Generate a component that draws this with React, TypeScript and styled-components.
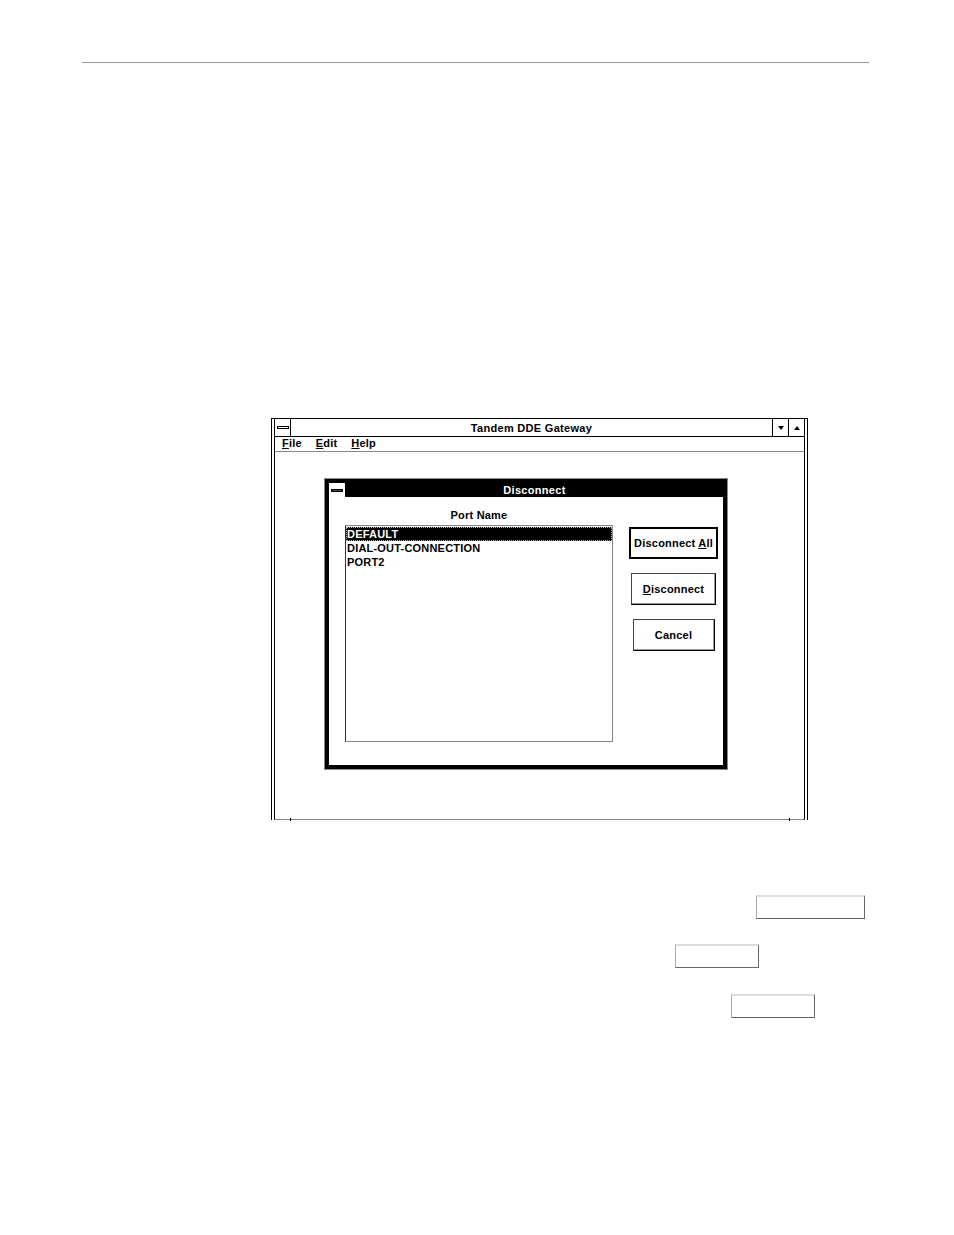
import { FC } from "react";
import styled, { createGlobalStyle } from "styled-components";

const GlobalStyle = createGlobalStyle`
  html, body {
    margin: 0;
    padding: 0;
    background: #fff;
  }
  body {
    font-family: "Liberation Sans", Arial, sans-serif;
    color: #000;
  }
`;

const Page = styled.div`
  width: 954px;
  height: 1235px;
  padding-top: 62px;
  box-sizing: border-box;
  overflow: hidden;
`;

const Rule = styled.div`
  margin-left: 82px;
  width: 787px;
  height: 1px;
  background: #999;
`;

const Figure = styled.div`
  margin-top: 355px;
  margin-left: 271px;
`;

/* win 3.x style main window, double frame on the sides */
const WindowFrame = styled.div`
  position: relative;
  width: 537px;
  height: 402px;
  box-sizing: border-box;
  border: 1px solid #000;
  border-bottom: none;
  padding: 0 2px;

  &:before,
  &:after {
    content: "";
    position: absolute;
    bottom: -1px;
    width: 1px;
    height: 3px;
    background: #000;
  }
  &:before {
    left: 18px;
  }
  &:after {
    right: 17px;
  }
`;

const WindowInner = styled.div`
  height: 100%;
  box-sizing: border-box;
  border-left: 1px solid #000;
  border-right: 1px solid #000;
  border-bottom: 1px solid #888;
  display: flex;
  flex-direction: column;
`;

const TitleBar = styled.div`
  height: 17px;
  border-bottom: 1px solid #000;
  display: flex;
  align-items: stretch;
`;

const SysBox = styled.div<{ $dark?: boolean }>`
  flex: 0 0 ${(p) => (p.$dark ? 16 : 15)}px;
  background: #fff;
  border-right: 1px solid #000;
  display: flex;
  align-items: center;
  justify-content: center;

  span {
    display: block;
    width: 10px;
    height: 1px;
    border: 1px solid #000;
    background: ${(p) => (p.$dark ? "#444" : "#fff")};
  }
`;

const Title = styled.div<{ $inverse?: boolean }>`
  flex: 1;
  display: flex;
  align-items: center;
  justify-content: center;
  font-size: 11px;
  font-weight: bold;
  letter-spacing: 0.3px;
  color: ${(p) => (p.$inverse ? "#fff" : "#000")};
  background: ${(p) => (p.$inverse ? "#000" : "#fff")};
`;

const SizeBtn = styled.div<{ $up?: boolean }>`
  flex: 0 0 15px;
  border-left: 1px solid #000;
  display: flex;
  align-items: center;
  justify-content: center;

  &:after {
    content: "";
    width: 0;
    height: 0;
    border-left: 3px solid transparent;
    border-right: 3px solid transparent;
    ${(p) => (p.$up ? "border-bottom: 4px solid #000;" : "border-top: 4px solid #000;")}
  }
`;

const MenuBar = styled.div`
  height: 15px;
  border-bottom: 1px solid #888;
  display: flex;
  align-items: center;
  padding-left: 7px;
  padding-bottom: 2px;
  box-sizing: border-box;
  gap: 14px;
  font-size: 11px;
  font-weight: bold;
  letter-spacing: 0.2px;

  u {
    text-underline-offset: 1px;
  }
`;

const Client = styled.div`
  flex: 1;
  padding-top: 27px;
  padding-left: 50px;
`;

const Dialog = styled.div`
  width: 402px;
  height: 290px;
  box-sizing: border-box;
  border: 4px solid #000;
  box-shadow: 0 0 0 1px #888;
  background: #fff;
  display: flex;
  flex-direction: column;
`;

const DialogTitle = styled.div`
  height: 14px;
  display: flex;
  background: #000;
`;

const DialogBody = styled.div`
  display: grid;
  grid-template-columns: 268px 89px;
  column-gap: 16px;
  padding: 11px 0 0 16px;
`;

const ListColumn = styled.div`
  display: flex;
  flex-direction: column;
`;

const Label = styled.div`
  height: 14px;
  line-height: 14px;
  text-align: center;
  font-size: 11px;
  font-weight: bold;
  letter-spacing: 0.2px;
  margin-bottom: 3px;
`;

const ListBox = styled.div`
  height: 217px;
  box-sizing: border-box;
  border: 1px solid #888;
  border-left-color: #333;
  padding-top: 1px;
`;

const ListItem = styled.div<{ $selected?: boolean }>`
  height: 14px;
  line-height: 14px;
  box-sizing: border-box;
  padding-left: 1px;
  font-size: 11px;
  font-weight: bold;
  letter-spacing: 0.2px;
  color: ${(p) => (p.$selected ? "#fff" : "#000")};
  background: ${(p) => (p.$selected ? "#000" : "transparent")};
  outline: ${(p) => (p.$selected ? "1px dotted #bbb" : "none")};
  outline-offset: -1px;
`;

const ButtonColumn = styled.div`
  padding-top: 19px;
  display: flex;
  flex-direction: column;
  align-items: center;
  gap: 14px;
`;

const Button = styled.button<{ $width: number; $default?: boolean }>`
  width: ${(p) => p.$width}px;
  height: 32px;
  box-sizing: border-box;
  background: #fff;
  padding: 0;
  font-family: "Liberation Sans", Arial, sans-serif;
  font-size: 11px;
  font-weight: bold;
  letter-spacing: 0.2px;
  color: #000;
  border: ${(p) => (p.$default ? "2px solid #000" : "1px solid #000")};
  border-top-color: ${(p) => (p.$default ? "#000" : "#444")};
  border-left-color: ${(p) => (p.$default ? "#000" : "#444")};
  box-shadow: ${(p) => (p.$default ? "none" : "inset -1px -1px 0 #999")};

  u {
    text-underline-offset: 1px;
  }
`;

const Notes = styled.div`
  margin-top: 75px;
  display: flex;
  flex-direction: column;
`;

const FieldBox = styled.div<{ $left: number; $gap: number; $width: number }>`
  margin-left: ${(p) => p.$left}px;
  margin-top: ${(p) => p.$gap}px;
  width: ${(p) => p.$width}px;
  height: 24px;
  box-sizing: border-box;
  border: 1px solid #666;
  border-top: 2px solid #ddd;
  border-left-color: #aaa;
`;

const ports = ["DEFAULT", "DIAL-OUT-CONNECTION", "PORT2"];

const App: FC = () => {
  return (
    <Page>
      <GlobalStyle />
      <Rule />
      <Figure>
        <WindowFrame>
          <WindowInner>
            <TitleBar>
              <SysBox>
                <span />
              </SysBox>
              <Title>Tandem DDE Gateway</Title>
              <SizeBtn />
              <SizeBtn $up />
            </TitleBar>
            <MenuBar>
              <span>
                <u>F</u>ile
              </span>
              <span>
                <u>E</u>dit
              </span>
              <span>
                <u>H</u>elp
              </span>
            </MenuBar>
            <Client>
              <Dialog>
                <DialogTitle>
                  <SysBox $dark>
                    <span />
                  </SysBox>
                  <Title $inverse>Disconnect</Title>
                </DialogTitle>
                <DialogBody>
                  <ListColumn>
                    <Label>Port Name</Label>
                    <ListBox>
                      {ports.map((port, i) => (
                        <ListItem key={port} $selected={i === 0}>
                          {port}
                        </ListItem>
                      ))}
                    </ListBox>
                  </ListColumn>
                  <ButtonColumn>
                    <Button $width={89} $default>
                      Disconnect <u>A</u>ll
                    </Button>
                    <Button $width={85}>
                      <u>D</u>isconnect
                    </Button>
                    <Button $width={82}>Cancel</Button>
                  </ButtonColumn>
                </DialogBody>
              </Dialog>
            </Client>
          </WindowInner>
        </WindowFrame>
      </Figure>
      <Notes>
        <FieldBox $left={756} $gap={0} $width={109} />
        <FieldBox $left={675} $gap={25} $width={84} />
        <FieldBox $left={731} $gap={26} $width={84} />
      </Notes>
    </Page>
  );
};

export default App;
